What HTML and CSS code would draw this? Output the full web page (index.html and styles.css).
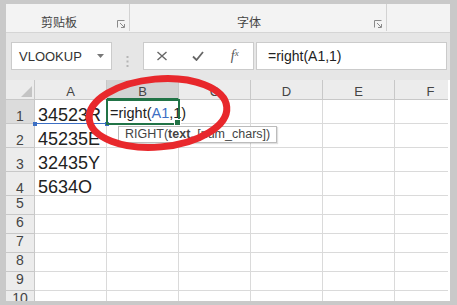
FILE: index.html
```html
<!DOCTYPE html>
<html lang="zh-CN">
<head>
    <meta charset="UTF-8">
    <title>right 函数</title>
    <link rel="stylesheet" href="styles.css">
</head>
<body>
    <div class="window">
        <div class="ribbon">
            <div class="group group-clip">
                <span class="group-label">剪贴板</span>
                <svg class="launcher" width="9" height="8" viewBox="0 0 9 8">
                    <path d="M0.5 7.5V0.5H7.5" fill="none" stroke="#8a8a8a"/>
                    <path d="M3 3L7 7M7.5 4V7.5H4" fill="none" stroke="#8a8a8a"/>
                </svg>
            </div>
            <div class="group group-font">
                <span class="group-label">字体</span>
                <svg class="launcher" width="9" height="8" viewBox="0 0 9 8">
                    <path d="M0.5 7.5V0.5H7.5" fill="none" stroke="#8a8a8a"/>
                    <path d="M3 3L7 7M7.5 4V7.5H4" fill="none" stroke="#8a8a8a"/>
                </svg>
            </div>
            <div class="group group-rest"></div>
        </div>

        <div class="formula-bar">
            <div class="name-box">
                <span>VLOOKUP</span>
                <svg class="caret" width="7" height="4" viewBox="0 0 7 4"><path d="M0 0H7L3.5 4Z" fill="#777"/></svg>
            </div>
            <div class="grip">
                <svg width="3" height="11" viewBox="0 0 3 11">
                    <rect x="0.5" y="0" width="2" height="2" fill="#b5b5b5"/>
                    <rect x="0.5" y="4.5" width="2" height="2" fill="#b5b5b5"/>
                    <rect x="0.5" y="9" width="2" height="2" fill="#b5b5b5"/>
                </svg>
            </div>
            <div class="fx-box">
                <svg class="fx-icon" width="11" height="10" viewBox="0 0 11 10">
                    <path d="M1 1L10 9M10 1L1 9" stroke="#666" stroke-width="1.4" fill="none"/>
                </svg>
                <svg class="fx-icon" width="12" height="10" viewBox="0 0 12 10">
                    <path d="M1 5.5L4.5 9L11 1" stroke="#666" stroke-width="1.8" fill="none"/>
                </svg>
                <span class="fx-icon fx-text">f<sub>x</sub></span>
            </div>
            <div class="formula-input">=right(A1,1)</div>
        </div>

        <div class="sheet">
            <div class="cell hd corner"><span class="tri"></span></div>
            <div class="cell hd col">A</div>
            <div class="cell hd col sel-col">B</div>
            <div class="cell hd col">C</div>
            <div class="cell hd col">D</div>
            <div class="cell hd col">E</div>
            <div class="cell hd col">F</div>

            <div class="cell hd row tall sel-row">1</div>
            <div class="cell val ref">34523R</div>
            <div class="cell edit"><span>=right(<span class="ref-text">A1</span>,1)</span></div>
            <div class="cell"></div><div class="cell"></div><div class="cell"></div><div class="cell"></div>

            <div class="cell hd row tall">2</div>
            <div class="cell val">45235E</div>
            <div class="cell"></div><div class="cell"></div><div class="cell"></div><div class="cell"></div><div class="cell"></div>

            <div class="cell hd row tall">3</div>
            <div class="cell val">32435Y</div>
            <div class="cell"></div><div class="cell"></div><div class="cell"></div><div class="cell"></div><div class="cell"></div>

            <div class="cell hd row tall">4</div>
            <div class="cell val">5634O</div>
            <div class="cell"></div><div class="cell"></div><div class="cell"></div><div class="cell"></div><div class="cell"></div>

            <div class="cell hd row">5</div>
            <div class="cell"></div><div class="cell"></div><div class="cell"></div><div class="cell"></div><div class="cell"></div><div class="cell"></div>
            <div class="cell hd row">6</div>
            <div class="cell"></div><div class="cell"></div><div class="cell"></div><div class="cell"></div><div class="cell"></div><div class="cell"></div>
            <div class="cell hd row">7</div>
            <div class="cell"></div><div class="cell"></div><div class="cell"></div><div class="cell"></div><div class="cell"></div><div class="cell"></div>
            <div class="cell hd row">8</div>
            <div class="cell"></div><div class="cell"></div><div class="cell"></div><div class="cell"></div><div class="cell"></div><div class="cell"></div>
            <div class="cell hd row">9</div>
            <div class="cell"></div><div class="cell"></div><div class="cell"></div><div class="cell"></div><div class="cell"></div><div class="cell"></div>
            <div class="cell hd row">10</div>
            <div class="cell"></div><div class="cell"></div><div class="cell"></div><div class="cell"></div><div class="cell"></div><div class="cell"></div>
        </div>

        <div class="tooltip">RIGHT(<b>text</b>, [num_chars])</div>

        <svg class="marker" width="444" height="297" viewBox="0 0 444 297">
            <ellipse cx="152" cy="109" rx="69" ry="34" transform="rotate(-5 152 109)"
                     fill="none" stroke="#e8282c" stroke-width="7"/>
        </svg>
    </div>
</body>
</html>
```

FILE: styles.css
```css
body {
    margin: 0;
    height: 305px;
    overflow: hidden;
    background-color: #c9c9c9;
    font-family: "Liberation Sans", Arial, sans-serif;
    color: #222;
}
.window {
    position: relative;
    margin: 4px 7px 0 6px;
    height: 297px;
    background-color: #fff;
    overflow: hidden;
}

/* ribbon */
.ribbon {
    display: flex;
    height: 28px;
    background-color: #f3f3f3;
    border-bottom: 1px solid #d5d5d5;
}
.group {
    display: flex;
    align-items: flex-start;
    box-sizing: border-box;
    height: 27px;
    padding-top: 11px;
    border-right: 1px solid #d2d2d2;
}
.group-clip {
    width: 124px;
    padding-left: 35px;
}
.group-font {
    width: 257px;
    padding-left: 107px;
}
.group-rest {
    flex: 1;
    border-right: none;
}
.group-label {
    font-family: "Noto Sans CJK SC", sans-serif;
    font-size: 12px;
    line-height: 14px;
    color: #444;
}
.launcher {
    margin-left: auto;
    margin-right: 3px;
    margin-top: 5px;
}

/* formula bar */
.formula-bar {
    display: flex;
    box-sizing: border-box;
    height: 47px;
    padding: 9px 3px 0 5px;
    background-color: #e6e6e6;
}
.name-box,
.fx-box,
.formula-input {
    box-sizing: border-box;
    height: 28px;
    background-color: #fff;
    border: 1px solid #cbcbcb;
    display: flex;
    align-items: center;
}
.name-box {
    width: 101px;
    padding: 0 7px;
    font-size: 13px;
    color: #333;
}
.caret {
    margin-left: auto;
}
.grip {
    width: 31px;
    display: flex;
    align-items: center;
    justify-content: center;
}
.fx-box {
    width: 111px;
    justify-content: space-around;
}
.fx-icon {
    width: 12px;
    display: flex;
    justify-content: center;
}
.fx-text {
    font-family: "Liberation Serif", serif;
    font-style: italic;
    font-size: 14px;
    color: #555;
}
.fx-text sub {
    font-size: 9px;
    vertical-align: -1px;
}
.formula-input {
    flex: 1;
    margin-left: 2px;
    padding-left: 11px;
    font-size: 14px;
    color: #222;
}

/* sheet */
.sheet {
    display: grid;
    width: 442px;
    overflow: hidden;
    grid-template-columns: 29px repeat(6, 72px);
    grid-template-rows: 20px 24px 24px 24px 24px repeat(6, 19px);
}
.cell {
    box-sizing: border-box;
    border-right: 1px solid #dadada;
    border-bottom: 1px solid #dadada;
    display: flex;
    align-items: flex-end;
    min-width: 0;
}
.hd {
    background-color: #ececec;
    border-color: #c8c8c8;
    color: #444;
    justify-content: center;
}
.col {
    font-size: 13px;
    line-height: 12px;
    padding-bottom: 1px;
}
.corner {
    position: relative;
}
.tri {
    position: absolute;
    right: 2px;
    bottom: 2px;
    width: 0;
    height: 0;
    border-left: 11px solid transparent;
    border-bottom: 11px solid #c4c4c4;
}
.sel-col {
    background-color: #d3d3d3;
    border-bottom: 2px solid #217346;
    padding-bottom: 0;
}
.row {
    font-size: 14px;
    line-height: 12px;
    padding-bottom: 5px;
}
.row.tall {
    padding-bottom: 1px;
}
.sel-row {
    background-color: #dcdcdc;
}
.val {
    font-size: 18px;
    line-height: 16px;
    padding-left: 3px;
    white-space: nowrap;
}
.ref {
    position: relative;
    border-bottom-color: #3c6fc4;
}
.ref::before,
.ref::after {
    content: "";
    position: absolute;
    bottom: -3px;
    width: 4px;
    height: 4px;
    background-color: #3c6fc4;
}
.ref::before {
    left: -2px;
}
.ref::after {
    right: -3px;
}
.edit {
    position: relative;
    font-size: 14.5px;
    line-height: 14px;
    padding: 0 0 3px 3px;
    white-space: nowrap;
    outline: 2px solid #217346;
    outline-offset: -1px;
}
.edit::after {
    content: "";
    position: absolute;
    right: -3px;
    bottom: -3px;
    width: 5px;
    height: 5px;
    background-color: #217346;
    border: 1px solid #fff;
}
.ref-text {
    color: #3c6fc4;
}

/* overlays */
.tooltip {
    position: absolute;
    left: 112px;
    top: 122px;
    box-sizing: border-box;
    width: 159px;
    height: 17px;
    padding-left: 6px;
    background-color: #fff;
    border: 1px solid #bcbcbc;
    box-shadow: 1px 1px 1px rgba(0, 0, 0, 0.12);
    font-size: 12.5px;
    line-height: 15px;
    color: #444;
    white-space: nowrap;
}
.marker {
    position: absolute;
    left: 0;
    top: 0;
    pointer-events: none;
}
```
